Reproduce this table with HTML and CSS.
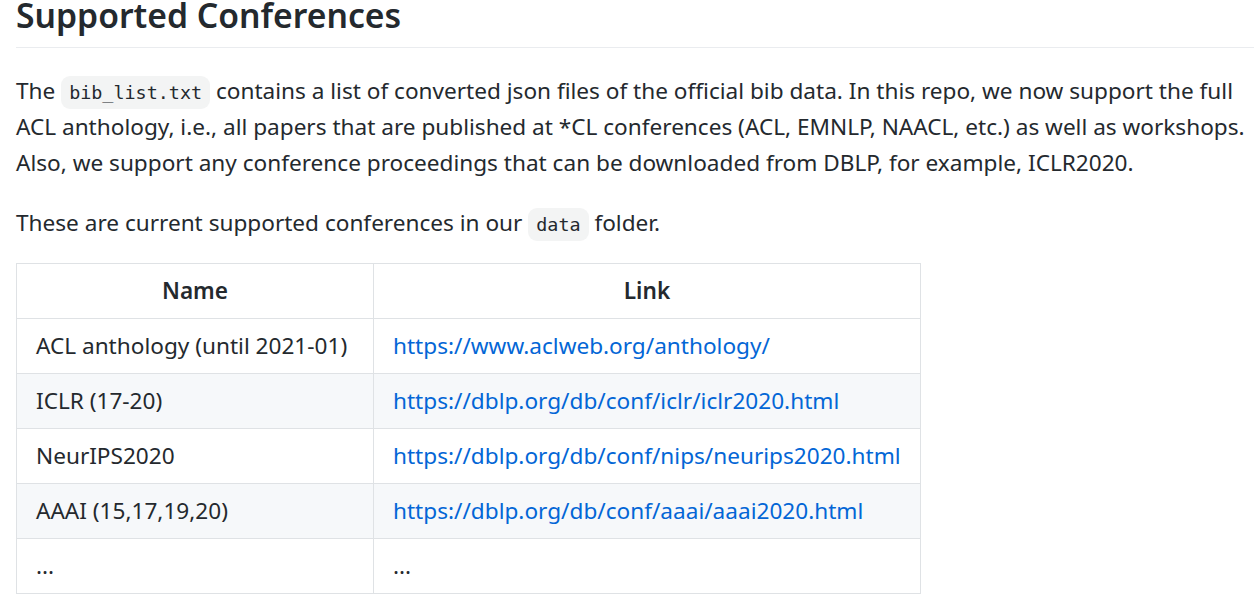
FILE: index.html
```html
<!DOCTYPE html>
<html>
<head>
<meta charset="utf-8">
<link rel="stylesheet" href="styles.css">
</head>
<body>
<article class="markdown">
  <h2 class="title">Supported Conferences</h2>
  <p>The <code>bib_list.txt</code> contains a list of converted json files of the official bib data. In this repo, we now support the full ACL anthology, i.e., all papers that are published at *CL conferences (ACL, EMNLP, NAACL, etc.) as well as workshops. Also, we support any conference proceedings that can be downloaded from DBLP, for example, ICLR2020.</p>
  <p>These are current supported conferences in our <code>data</code> folder.</p>
  <table class="conf-table">
    <colgroup><col class="col-name"><col class="col-link"></colgroup>
    <thead>
      <tr><th>Name</th><th>Link</th></tr>
    </thead>
    <tbody>
      <tr><td>ACL anthology (until 2021-01)</td><td><a href="#">https://www.aclweb.org/anthology/</a></td></tr>
      <tr><td>ICLR (17-20)</td><td><a href="#">https://dblp.org/db/conf/iclr/iclr2020.html</a></td></tr>
      <tr><td>NeurIPS2020</td><td><a href="#">https://dblp.org/db/conf/nips/neurips2020.html</a></td></tr>
      <tr><td>AAAI (15,17,19,20)</td><td><a href="#">https://dblp.org/db/conf/aaai/aaai2020.html</a></td></tr>
      <tr><td>...</td><td>...</td></tr>
    </tbody>
  </table>
</article>
</body>
</html>
```

FILE: styles.css
```css
html, body {
  margin: 0;
  padding: 0;
  background: #ffffff;
}

.markdown {
  width: 1238px;
  margin-left: 16px;
  font-family: "Noto Sans", "Open Sans", sans-serif;
  font-size: 22.6px;
  line-height: 36px;
  color: #24292e;
}

.title {
  margin: -9px 0 25px 0;
  padding-bottom: 8px;
  font-size: 33.7px;
  font-weight: 600;
  line-height: 48px;
  border-bottom: 1.5px solid #eaecef;
}

.markdown p {
  margin: 0 0 24px 0;
}

.markdown p:last-of-type {
  margin-bottom: 22px;
}

.markdown code {
  font-family: "DejaVu Sans Mono", "Liberation Mono", monospace;
  font-size: 18.4px;
  line-height: 1;
  padding: 6px 8px;
  background: #f3f4f4;
  border-radius: 9px;
}

.conf-table {
  border-collapse: collapse;
  table-layout: fixed;
  width: 904px;
}

.col-name { width: 357px; }
.col-link { width: 547px; }

.conf-table th,
.conf-table td {
  border: 1.5px solid #dfe2e5;
  padding: 9px 19px;
  height: 36px;
  line-height: 36px;
  white-space: nowrap;
}

.conf-table th {
  font-weight: 600;
  text-align: center;
}

.conf-table tbody tr:nth-child(odd) { background: #ffffff; }
.conf-table tbody tr:nth-child(even) { background: #f6f8fa; }

.conf-table a {
  color: #0366d6;
  text-decoration: none;
}
```
